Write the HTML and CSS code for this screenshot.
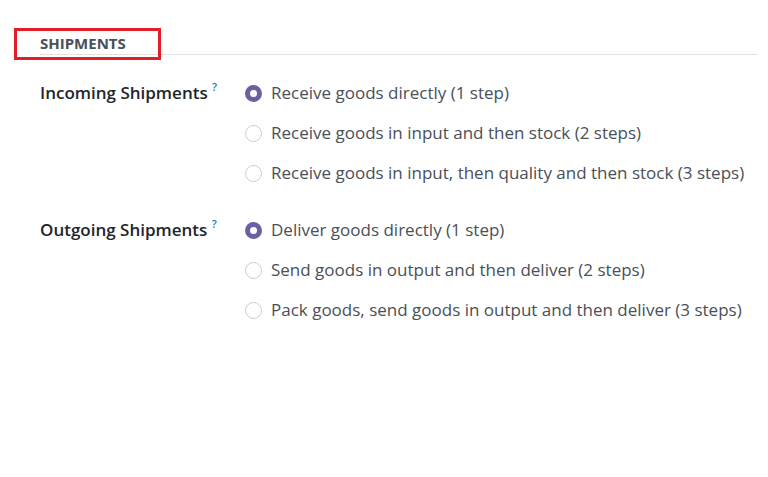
FILE: index.html
```html
<!DOCTYPE html>
<html lang="en">
<head>
    <meta charset="UTF-8">
    <meta name="viewport" content="width=device-width, initial-scale=1.0">
    <title>Shipments Settings</title>
    <link rel="stylesheet" href="styles.css">
</head>
<body>
    <div class="settings">
        <div class="section-head">
            <h2>SHIPMENTS</h2>
            <span class="highlight"></span>
        </div>

        <div class="setting">
            <div class="setting-label">Incoming Shipments <sup>?</sup></div>
            <div class="options">
                <label class="option"><input type="radio" name="incoming" checked> Receive goods directly (1 step)</label>
                <label class="option"><input type="radio" name="incoming"> Receive goods in input and then stock (2 steps)</label>
                <label class="option"><input type="radio" name="incoming"> Receive goods in input, then quality and then stock (3 steps)</label>
            </div>
        </div>

        <div class="setting">
            <div class="setting-label">Outgoing Shipments <sup>?</sup></div>
            <div class="options">
                <label class="option"><input type="radio" name="outgoing" checked> Deliver goods directly (1 step)</label>
                <label class="option"><input type="radio" name="outgoing"> Send goods in output and then deliver (2 steps)</label>
                <label class="option"><input type="radio" name="outgoing"> Pack goods, send goods in output and then deliver (3 steps)</label>
            </div>
        </div>
    </div>
</body>
</html>
```

FILE: styles.css
```css
body {
    margin: 0;
    background-color: #fff;
    font-family: "Open Sans", sans-serif;
    color: #495057;
}

.settings {
    padding: 33px 11px 0 40px;
}

.section-head {
    position: relative;
    border-bottom: 1px solid #e2e2e2;
    padding-bottom: 1px;
}

.section-head h2 {
    margin: 0;
    font-size: 15px;
    font-weight: 700;
    color: #495057;
    line-height: 20px;
}

.highlight {
    position: absolute;
    left: -26px;
    top: -5px;
    width: 141px;
    height: 26px;
    border: 3px solid #e31e26;
}

.setting {
    display: flex;
    margin-top: 26px;
}

.setting + .setting {
    margin-top: 33px;
}

.setting-label {
    width: 205px;
    flex-shrink: 0;
    font-size: 17px;
    font-weight: 600;
    color: #212529;
    line-height: 24px;
}

.setting-label sup {
    font-size: 11px;
    font-weight: 600;
    color: #1f79b3;
    vertical-align: 8px;
    line-height: 0;
}

.options {
    display: flex;
    flex-direction: column;
    gap: 16px;
}

.option {
    display: flex;
    align-items: center;
    gap: 9px;
    font-size: 17px;
    line-height: 24px;
    color: #495057;
}

.option input {
    appearance: none;
    margin: 0;
    width: 17px;
    height: 17px;
    border: 1px solid #c9ccd0;
    border-radius: 50%;
    background: #fff;
}

.option input:checked {
    border: 5px solid #6d5fa3;
    background: #fff;
}
```
